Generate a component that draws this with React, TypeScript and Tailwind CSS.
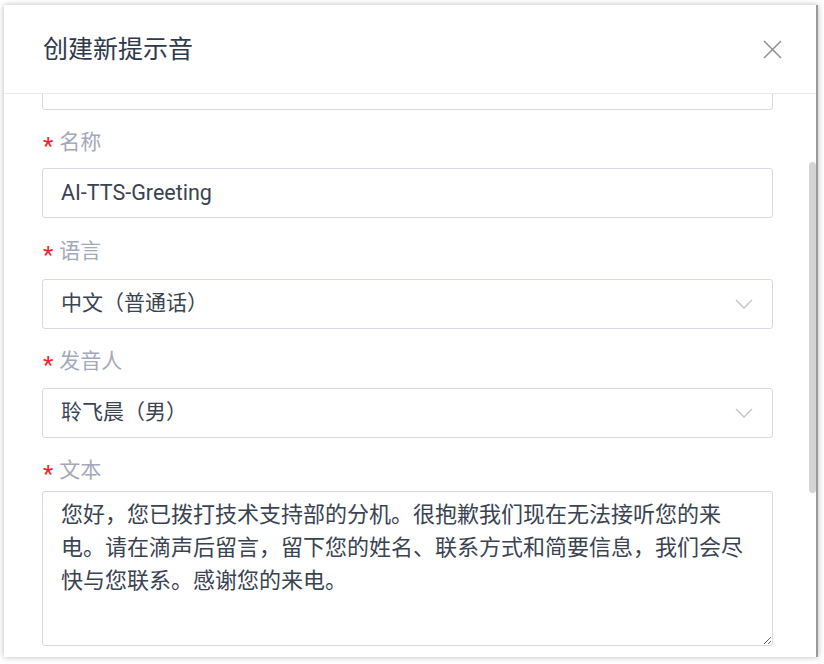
import React from "react";

const font = { fontFamily: "Roboto, 'Noto Sans CJK SC', sans-serif" };

function Label({ text, className }: { text: string; className: string }) {
  return (
    <div className={`flex items-center h-[24px] pl-[1px] ${className}`}>
      <span className="text-[24px] text-[#f5222d] leading-none mr-[6px] mt-[8px]">*</span>
      <span className="text-[21px] text-[#a5a8ba] leading-none">{text}</span>
    </div>
  );
}

function Chevron() {
  return (
    <svg width="18" height="10" viewBox="0 0 18 10" fill="none">
      <path d="M1 1 L9 9 L17 1" stroke="#c4c4c8" strokeWidth="1.4" />
    </svg>
  );
}

function Select({ value }: { value: string }) {
  return (
    <div className="h-[50px] border border-[#d9d9e3] rounded-[3px] flex items-center justify-between pl-[18px] pr-[19px]">
      <span className="text-[21px] text-[#3a4352]">{value}</span>
      <Chevron />
    </div>
  );
}

export default function App() {
  return (
    <div className="w-[824px] h-[664px] bg-white overflow-hidden pt-[5px] pl-[4px]" style={font}>
      <div className="w-[814px] h-[652px] bg-white shadow-[0_0_6px_rgba(0,0,0,0.28)] border-r-2 border-[#9a9a9a] flex flex-col">
        <div className="h-[89px] shrink-0 border-b border-[#ebebee] flex items-center justify-between pl-[39px] pr-[34px]">
          <span className="text-[25px] text-[#2e3a4b] leading-none">创建新提示音</span>
          <svg width="19" height="19" viewBox="0 0 19 19" fill="none">
            <path d="M1 1 L18 18 M18 1 L1 18" stroke="#8e8e8e" strokeWidth="1.5" />
          </svg>
        </div>
        <div className="relative flex-1 overflow-hidden">
          <div className="absolute right-[0px] top-[68px] w-[7px] h-[331px] rounded-full bg-[#d4d4d4]" />
          <div className="pl-[38px] pr-[43px] mt-[-34px]">
            <div className="h-[50px] border border-[#d9d9e3] rounded-[3px]" />
            <Label text="名称" className="mt-[20px] mb-[14px]" />
            <div className="h-[50px] border border-[#d9d9e3] rounded-[3px] flex items-center pl-[18px]">
              <span className="text-[21.5px] text-[#3a4352]">AI-TTS-Greeting</span>
            </div>
            <Label text="语言" className="mt-[21px] mb-[16px]" />
            <Select value="中文（普通话）" />
            <Label text="发音人" className="mt-[20px] mb-[15px]" />
            <Select value="聆飞晨（男）" />
            <Label text="文本" className="mt-[20px] mb-[9px]" />
            <textarea
              readOnly
              className="block w-full h-[155px] border border-[#d9d9e3] rounded-[3px] pl-[18px] pr-[20px] pt-[6px] text-[22px] leading-[33px] text-[#3a4352] outline-none"
              style={font}
              defaultValue="您好，您已拨打技术支持部的分机。很抱歉我们现在无法接听您的来电。请在滴声后留言，留下您的姓名、联系方式和简要信息，我们会尽快与您联系。感谢您的来电。"
            />
          </div>
        </div>
      </div>
    </div>
  );
}
